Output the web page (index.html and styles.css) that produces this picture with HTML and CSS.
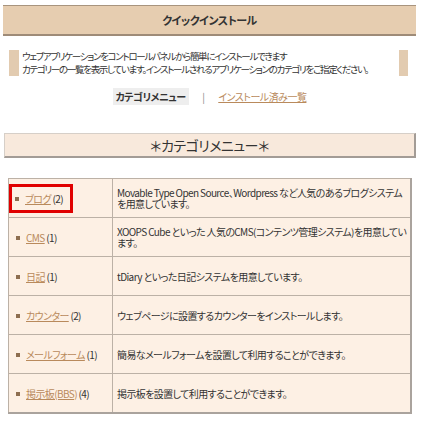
FILE: index.html
```html
<!DOCTYPE html>
<html lang="ja">
<head>
    <meta charset="UTF-8">
    <title>クイックインストール</title>
    <link rel="stylesheet" href="styles.css">
</head>
<body>
    <div class="page">
        <div class="title-bar">クイックインストール</div>

        <div class="intro">
            <span class="intro-bar"></span>
            <p class="intro-text">ウェブアプリケーションをコントロールパネルから簡単にインストールできます<br>カテゴリーの一覧を表示しています。インストールされるアプリケーションのカテゴリをご指定ください。</p>
            <span class="intro-bar right"></span>
        </div>

        <div class="tabs">
            <span class="tab-current">カテゴリメニュー</span>
            <span class="tab-sep">|</span>
            <a href="#" class="tab-link">インストール済み一覧</a>
        </div>

        <div class="cat-header">＊カテゴリメニュー＊</div>

        <table class="cat-table">
            <tr>
                <td class="cat-name"><span class="picked"><span class="bullet"></span><a href="#">ブログ</a> (2)</span></td>
                <td class="cat-desc">Movable Type Open Source、Wordpress など人気のあるブログシステムを用意しています。</td>
            </tr>
            <tr>
                <td class="cat-name"><span class="bullet"></span><a href="#">CMS</a> (1)</td>
                <td class="cat-desc">XOOPS Cube といった 人気のCMS(コンテンツ管理システム)を用意しています。</td>
            </tr>
            <tr>
                <td class="cat-name"><span class="bullet"></span><a href="#">日記</a> (1)</td>
                <td class="cat-desc">tDiary といった日記システムを用意しています。</td>
            </tr>
            <tr>
                <td class="cat-name"><span class="bullet"></span><a href="#">カウンター</a> (2)</td>
                <td class="cat-desc">ウェブページに設置するカウンターをインストールします。</td>
            </tr>
            <tr>
                <td class="cat-name"><span class="bullet"></span><a href="#">メールフォーム</a> (1)</td>
                <td class="cat-desc">簡易なメールフォームを設置して利用することができます。</td>
            </tr>
            <tr>
                <td class="cat-name"><span class="bullet"></span><a href="#">掲示板(BBS)</a> (4)</td>
                <td class="cat-desc">掲示板を設置して利用することができます。</td>
            </tr>
        </table>
    </div>
</body>
</html>
```

FILE: styles.css
```css
body {
    margin: 0;
    background-color: #fff;
    font-family: "Noto Sans CJK JP", "DejaVu Sans", sans-serif;
    font-size: 10px;
    color: #333;
    font-feature-settings: "palt";
}

.page {
    width: 413px;
    margin: 5px 0 0 3px;
}

.title-bar {
    height: 28px;
    line-height: 28px;
    background-color: #e6cdb0;
    border-top: 1px solid #a8947e;
    border-bottom: 2px solid #9e8b78;
    text-align: center;
    font-size: 11px;
    font-weight: bold;
    letter-spacing: -0.5px;
}

.intro {
    display: flex;
    margin: 14px 8px 0 6px;
    height: 26px;
}

.intro-bar {
    width: 10px;
    background-color: #e2cbb0;
}

.intro-bar.right {
    width: 9px;
}

.intro-text {
    flex: 1;
    margin: 0;
    padding-left: 3px;
    font-size: 9.5px;
    line-height: 13px;
    letter-spacing: -1.3px;
    white-space: nowrap;
}

.tabs {
    margin-top: 13px;
    text-align: center;
    height: 16px;
    line-height: 16px;
    font-size: 10px;
    letter-spacing: -0.5px;
}

.tab-current {
    background-color: #eee;
    font-weight: bold;
    padding: 1px 3px;
}

.tab-sep {
    color: #888;
    margin: 0 12px;
}

.tab-link {
    color: #b98a5c;
}

.cat-header {
    margin: 28px 0 0 1px;
    height: 22px;
    line-height: 22px;
    background-color: #f8e9dc;
    border-top: 1px solid #d6cfc8;
    border-left: 1px solid #d6cfc8;
    border-right: 2px solid #a39c96;
    border-bottom: 2px solid #a39c96;
    text-align: center;
    font-size: 14px;
    letter-spacing: -0.5px;
}

.cat-table {
    margin: 20px 0 0 5px;
    width: 404px;
    border-collapse: collapse;
    background-color: #fdf0e4;
    border-right: 2px solid #aaa39d;
    border-bottom: 2px solid #aaa39d;
}

.cat-table td {
    border: 1px solid #bcb1a6;
    height: 38px;
    padding: 0 4px;
    letter-spacing: -0.6px;
    line-height: 11px;
}

.cat-desc {
    letter-spacing: -1px;
}

.cat-table .cat-desc {
    padding: 0 2px 0 4px;
}

.cat-name {
    width: 95px;
    white-space: nowrap;
}

.cat-name a {
    color: #b98a5c;
}

.bullet {
    display: inline-block;
    width: 4px;
    height: 4px;
    background-color: #8d6e50;
    margin: 0 6px 1px 3px;
    vertical-align: middle;
}

.picked {
    display: inline-block;
    border: 3px solid #e00000;
    padding: 6px 7px 6px 0;
    margin-left: -4px;
}
```
